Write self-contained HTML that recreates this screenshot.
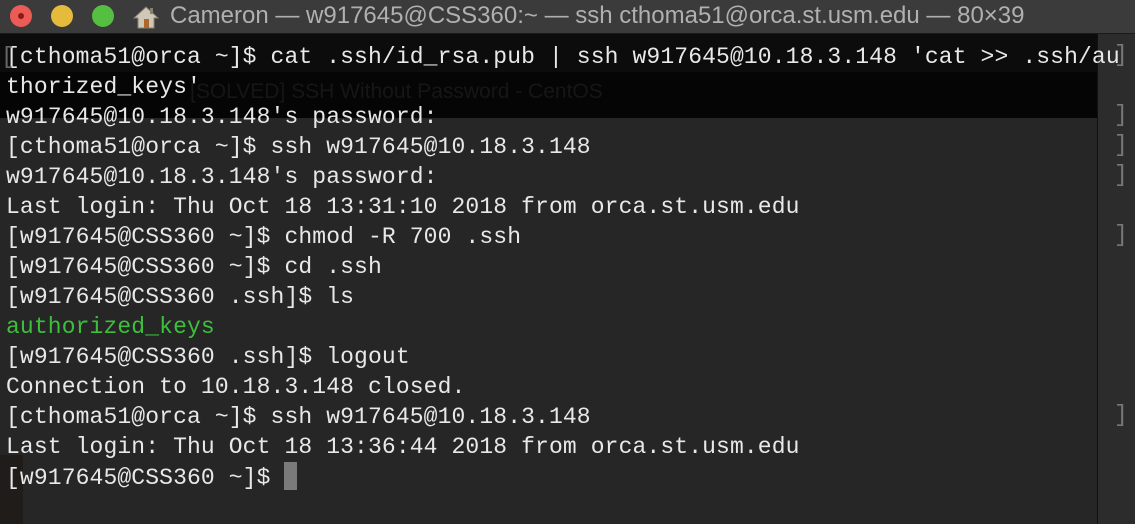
<!DOCTYPE html>
<html><head><meta charset="utf-8"><style>
html,body{margin:0;padding:0;width:1135px;height:524px;overflow:hidden;background:#262626;font-family:"Liberation Mono",monospace;}
#title{position:absolute;left:0;top:0;width:1135px;height:33px;background:#3b3b3b;border-bottom:1px solid #1a1a1a;}
.dot{position:absolute;top:5px;width:22px;height:22px;border-radius:50%;}
#ttl{position:absolute;left:170px;top:2px;font-family:"Liberation Sans",sans-serif;font-size:24px;color:#b0b0b0;white-space:nowrap;}
#band{position:absolute;left:0;top:34px;width:1097px;height:84px;background:#050505;}
#band2{position:absolute;left:0;top:34px;width:1097px;height:38px;background:#0c0c0c;}
#rs{position:absolute;left:1097px;top:34px;width:38px;height:490px;background:#2c2c2c;border-left:1px solid #111;}
#ls{position:absolute;left:0;top:455px;width:23px;height:69px;background:#1f1c1a;}
#term{position:absolute;left:6px;top:42px;font-size:23px;letter-spacing:0.12px;line-height:30px;color:#e8e8e8;white-space:pre;}
.g{color:#3cc03c}
.br{position:absolute;left:1114px;font-size:23px;color:#777;font-family:"Liberation Mono",monospace;}
.lb{position:absolute;left:-5px;font-size:23px;color:#666;}
#cur{display:inline-block;width:13px;height:28px;background:#7a7a7a;vertical-align:-6px;}
#ghost{position:absolute;left:190px;top:80px;font-family:"Liberation Sans",sans-serif;font-size:21px;color:#161616;}
</style></head><body>
<div id="title">
<div class="dot" style="left:10px;background:#ec5b56"><div style="position:absolute;left:8px;top:8px;width:6px;height:6px;border-radius:50%;background:#8a1a15"></div></div>
<div class="dot" style="left:51px;background:#e6bb3c"></div>
<div class="dot" style="left:92px;background:#55bf41"></div>
<svg style="position:absolute;left:133px;top:5px" width="26" height="24" viewBox="0 0 26 24"><path d="M13 2 L25 13 H21 V23 H5 V13 H1 Z" fill="#cfc7b8" stroke="#8a8070"/><rect x="11" y="14" width="5" height="9" fill="#b0662a"/><rect x="17" y="3" width="3" height="6" fill="#8a8070"/></svg>
<div id="ttl">Cameron — w917645@CSS360:~ — ssh cthoma51@orca.st.usm.edu — 80×39</div>
</div>
<div id="band"></div><div id="band2"></div>
<div id="ghost">[SOLVED] SSH Without Password - CentOS</div>
<div id="rs"></div><div id="ls"></div>
<div class="br" style="top:42px">]</div>
<div class="br" style="top:102px">]</div>
<div class="br" style="top:132px">]</div>
<div class="br" style="top:162px">]</div>
<div class="br" style="top:222px">]</div>
<div class="br" style="top:402px">]</div>
<div id="term"><span class="lb" style="top:0">[</span>[cthoma51@orca ~]$ cat .ssh/id_rsa.pub | ssh w917645@10.18.3.148 'cat >> .ssh/au
thorized_keys'
w917645@10.18.3.148's password:
[cthoma51@orca ~]$ ssh w917645@10.18.3.148
w917645@10.18.3.148's password:
Last login: Thu Oct 18 13:31:10 2018 from orca.st.usm.edu
[w917645@CSS360 ~]$ chmod -R 700 .ssh
[w917645@CSS360 ~]$ cd .ssh
[w917645@CSS360 .ssh]$ ls
<span class="g">authorized_keys</span>
[w917645@CSS360 .ssh]$ logout
Connection to 10.18.3.148 closed.
[cthoma51@orca ~]$ ssh w917645@10.18.3.148
Last login: Thu Oct 18 13:36:44 2018 from orca.st.usm.edu
[w917645@CSS360 ~]$ <span id="cur"></span></div>
</body></html>
